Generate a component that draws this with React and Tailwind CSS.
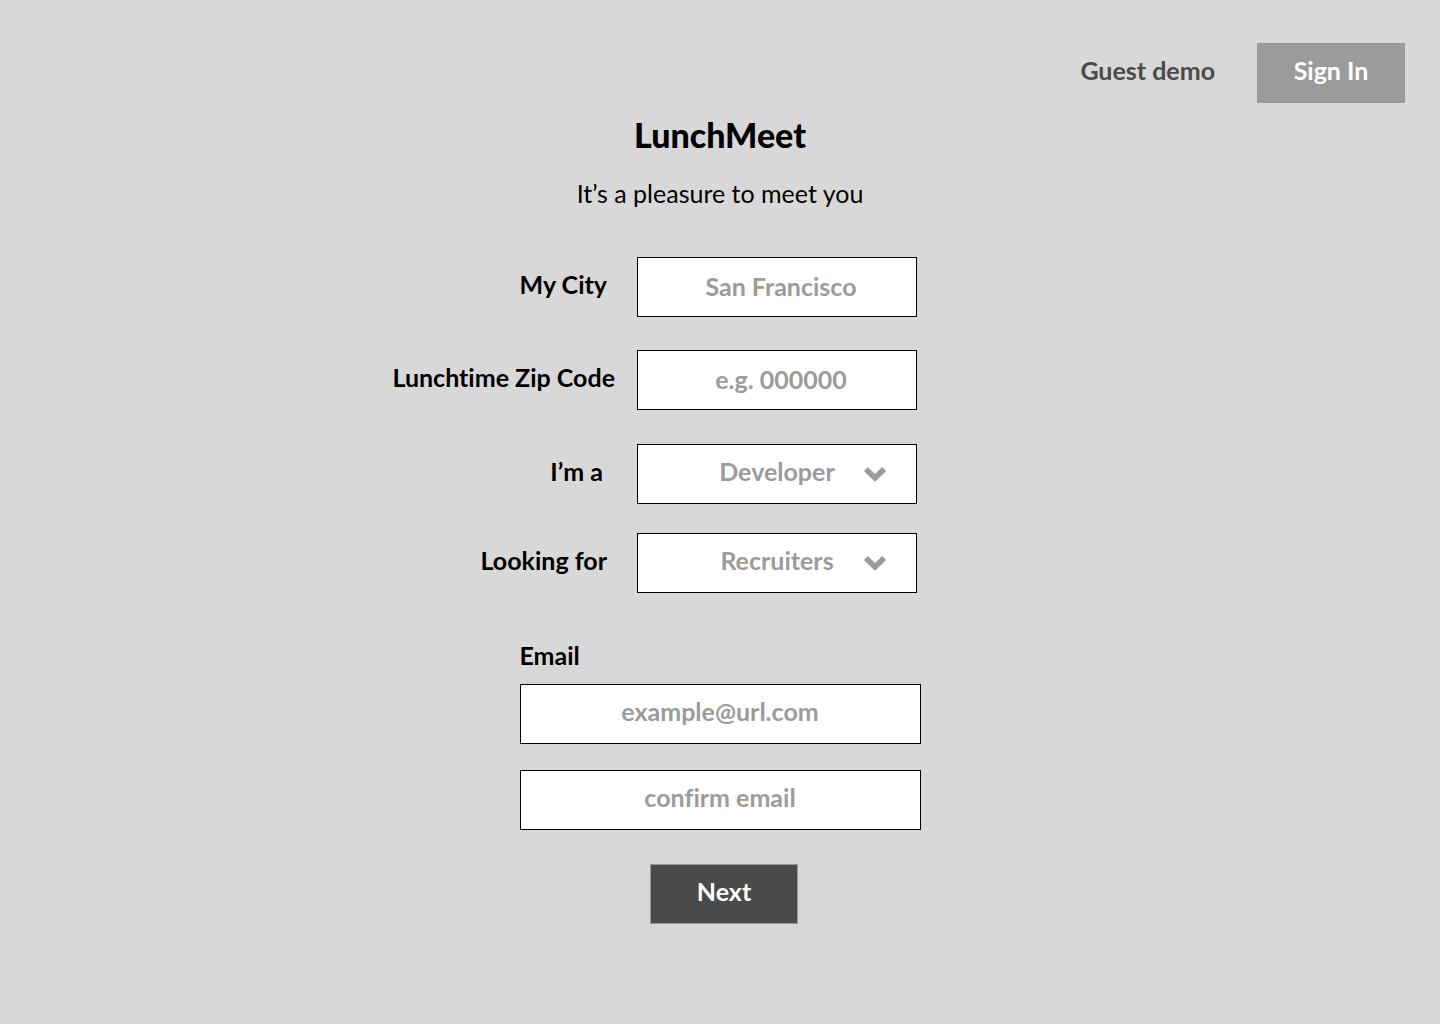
const fieldBase =
  "h-[60px] w-full min-w-0 rounded-none border border-black bg-white text-center font-bold text-[#9b9b9b] placeholder:text-[#9b9b9b] placeholder:opacity-100";

function Row({ id, label, labelClass, rowClass, children }) {
  return (
    <div className={`grid grid-cols-[226px_280px] items-center gap-x-[22px] ${rowClass}`}>
      <label htmlFor={id} className={`pb-1.5 text-right font-bold whitespace-nowrap ${labelClass}`}>
        {label}
      </label>
      {children}
    </div>
  );
}

function Dropdown({ id, options }) {
  return (
    <div className="relative">
      <select id={id} className={`${fieldBase} appearance-none pb-1.5 [text-align-last:center]`}>
        {options.map((option) => (
          <option key={option}>{option}</option>
        ))}
      </select>
      <svg
        viewBox="0 0 22 15"
        className="pointer-events-none absolute top-[23px] right-[31px] h-[15px] w-[22px]"
        fill="#9b9b9b"
        aria-hidden="true"
      >
        <path d="M0.3 3.6 L3.4 0.5 Q3.9 0 4.4 0.5 L11 7 L17.6 0.5 Q18.1 0 18.6 0.5 L21.7 3.6 Q22.1 4 21.7 4.4 L11.6 14.2 Q11 14.7 10.4 14.2 L0.3 4.4 Q-0.1 4 0.3 3.6 Z" />
      </svg>
    </div>
  );
}

export default function App() {
  return (
    <div className="min-h-screen bg-[#d8d8d8] pt-[43px] font-['Lato',sans-serif] text-[25px] leading-8 text-black [font-variant-ligatures:no-common-ligatures]">
      <header className="flex items-center justify-end gap-[42px] pr-[35px]">
        <a href="#demo" className="pb-1.5 font-bold text-[#4a4a4a]">
          Guest demo
        </a>
        <button type="button" className="h-[60px] w-[148px] border border-[#979797] bg-[#9b9b9b] pb-1.5 font-bold text-white">
          Sign In
        </button>
      </header>

      <main className="flex flex-col items-center pb-24">
        <h1 className="mt-3 text-[34px] leading-10 font-black">LunchMeet</h1>
        <p className="mt-[22px]">It’s a pleasure to meet you</p>

        <form className="mt-12 flex w-[662px] max-w-full flex-col">
          <Row id="city" label="My City" labelClass="pr-2" rowClass="">
            <input id="city" type="text" placeholder="San Francisco" className={`${fieldBase} pb-0.5 pl-2`} />
          </Row>
          <Row id="zip" label="Lunchtime Zip Code" labelClass="" rowClass="mt-[33px]">
            <input id="zip" type="text" placeholder="e.g. 000000" className={`${fieldBase} pb-0.5 pl-2`} />
          </Row>
          <Row id="role" label="I’m a" labelClass="pr-3" rowClass="mt-[34px]">
            <Dropdown id="role" options={["Developer", "Recruiter"]} />
          </Row>
          <Row id="target" label="Looking for" labelClass="pr-2" rowClass="mt-[29px]">
            <Dropdown id="target" options={["Recruiters", "Developers"]} />
          </Row>

          <div className="mx-auto mt-[46px] flex w-[401px] max-w-full flex-col">
            <label htmlFor="email" className="font-bold">
              Email
            </label>
            <input id="email" type="email" placeholder="example@url.com" className={`${fieldBase} mt-[13px] pb-1.5`} />
            <input
              type="email"
              aria-label="Confirm email"
              placeholder="confirm email"
              className={`${fieldBase} mt-[26px] pb-1.5`}
            />
          </div>

          <div className="mt-[34px] flex justify-center pl-2">
            <button type="submit" className="h-[60px] w-[148px] border border-[#979797] bg-[#4a4a4a] pb-1.5 font-bold text-white">
              Next
            </button>
          </div>
        </form>
      </main>
    </div>
  );
}
